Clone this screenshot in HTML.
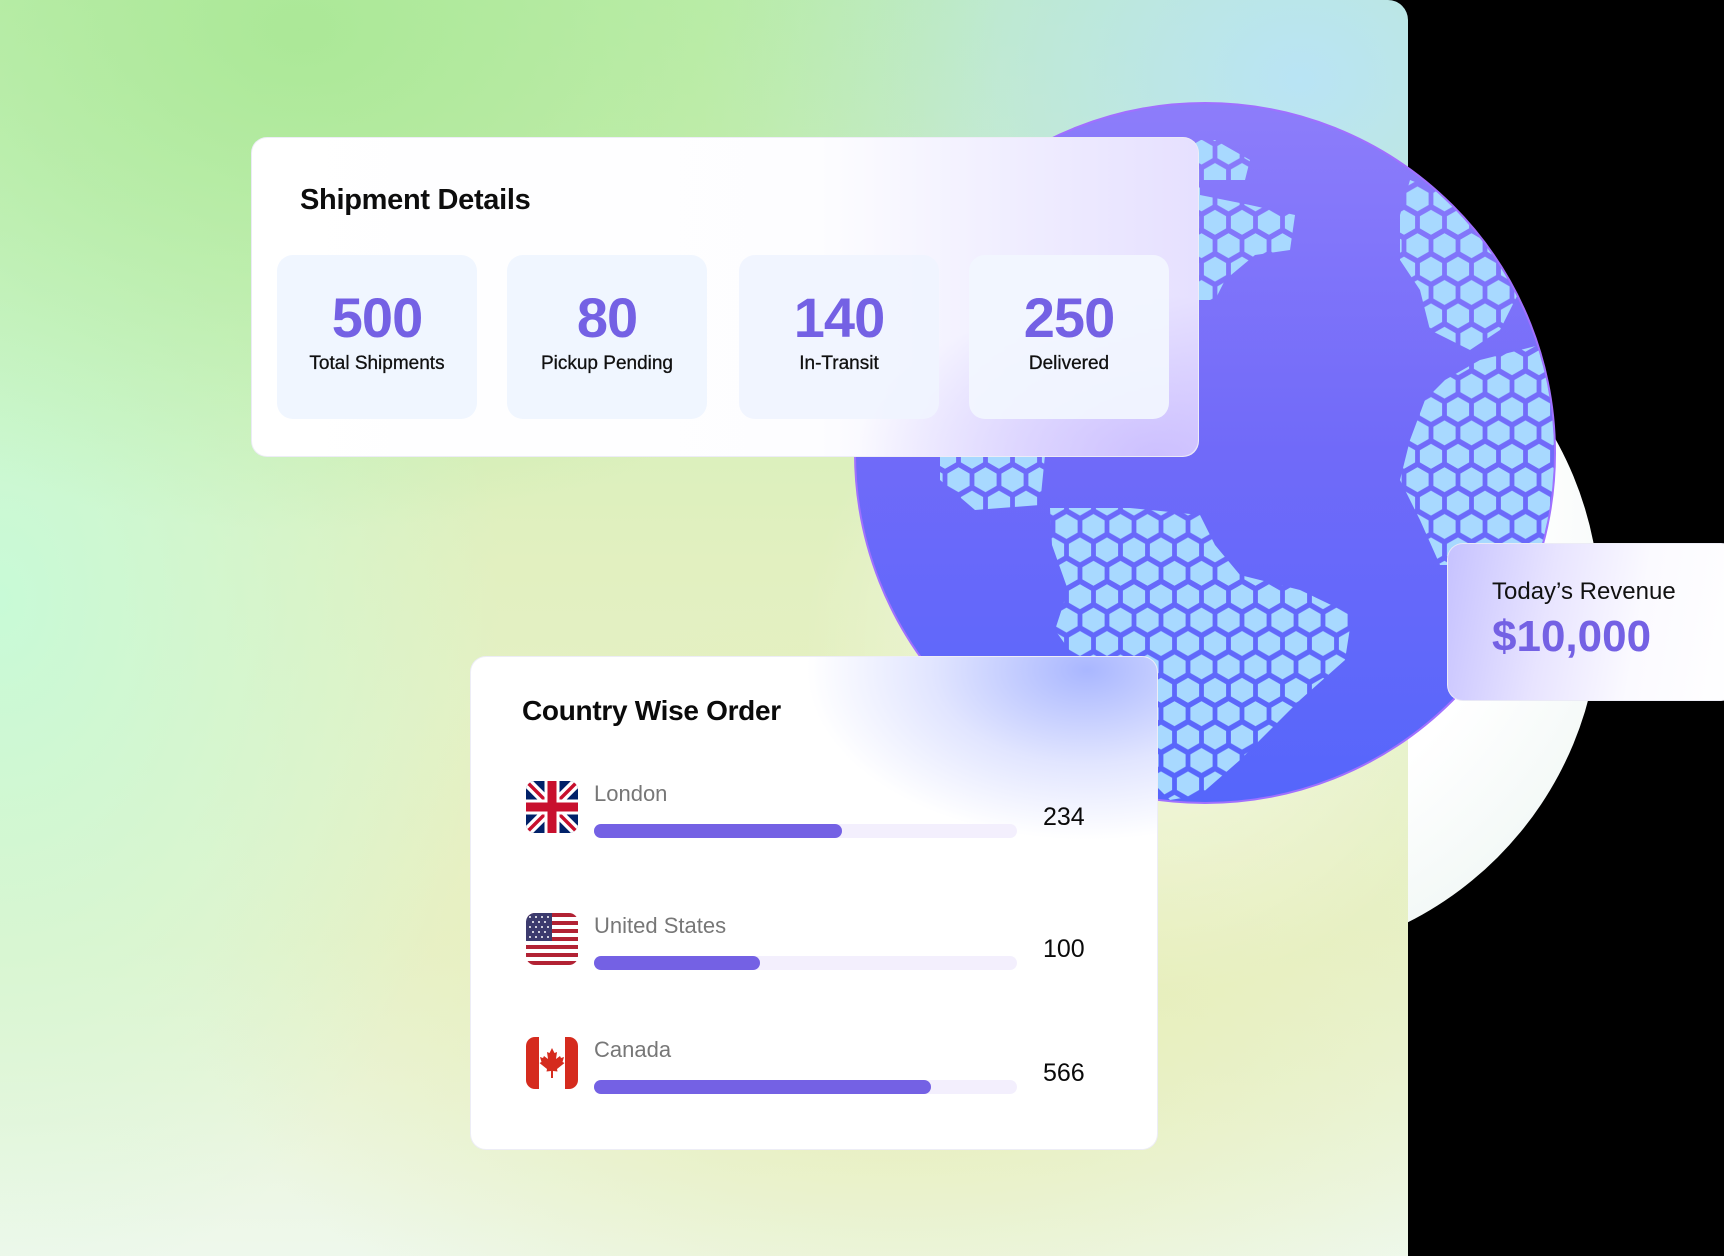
<!DOCTYPE html>
<html><head><meta charset="utf-8">
<style>
html,body{margin:0;padding:0}
body{width:1724px;height:1256px;background:#000;position:relative;overflow:hidden;font-family:"Liberation Sans",sans-serif}
.bg{position:absolute;left:0;top:0;width:1408px;height:1256px;border-top-right-radius:20px;
background:
radial-gradient(ellipse 700px 500px at 300px 30px,rgba(170,232,150,0.95),rgba(170,232,150,0) 100%),
radial-gradient(ellipse 600px 500px at 1300px 80px,rgba(185,228,245,1),rgba(185,228,245,0) 100%),
radial-gradient(ellipse 500px 700px at 0px 600px,rgba(200,250,215,1),rgba(200,250,215,0) 100%),
radial-gradient(ellipse 700px 400px at 900px 1000px,rgba(230,236,175,0.9),rgba(230,236,175,0) 100%),
linear-gradient(180deg,#c2eeb0 0%,#e2f0c0 45%,#e8f2cc 75%,#eef8ec 100%);}
.glow{position:absolute;left:900px;top:260px;width:700px;height:700px;border-radius:50%;
background:radial-gradient(circle at 40% 35%,#ffffff 55%,#f2f8f6 80%,#e6f0e8 100%)}
.glow2{position:absolute;left:800px;top:300px;width:700px;height:700px;border-radius:50%;
background:radial-gradient(circle,rgba(255,255,255,0.6),rgba(255,255,255,0) 70%)}
.card{position:absolute;background:rgba(255,255,255,0.96);border:1.5px solid rgba(235,235,245,0.9);border-radius:16px;box-sizing:border-box}
.ship{left:251px;top:137px;width:948px;height:320px;
background:linear-gradient(90deg,#fff 0%,#fdfdff 60%,#f0eeff 80%,#e6e0ff 100%)}
.ship:after{content:"";position:absolute;right:0;bottom:0;width:420px;height:240px;border-radius:16px;
background:radial-gradient(ellipse 300px 160px at 90% 100%,rgba(195,180,255,0.75),rgba(195,180,255,0))}
.ship h2{position:absolute;left:48px;top:46px;margin:0;font-size:29px;font-weight:700;color:#0d0d0d;letter-spacing:-0.3px}
.box{position:absolute;top:117px;width:200px;height:164px;border-radius:16px;background:#f0f6ff;text-align:center;z-index:1}
.box .n{position:absolute;left:0;right:0;top:30px;font-size:56px;font-weight:700;color:#7461e4;letter-spacing:-1px}
.box .l{position:absolute;left:0;right:0;top:98px;font-size:19px;color:#111;-webkit-text-stroke:0.3px #111}
.country{left:470px;top:656px;width:688px;height:494px;overflow:hidden;
background:#fff}
.country:before{content:"";position:absolute;left:280px;top:-120px;width:560px;height:380px;
background:radial-gradient(ellipse 280px 170px at 60% 35%,rgba(160,175,255,0.9),rgba(180,190,255,0.4) 55%,rgba(255,255,255,0) 100%)}
.country h2{position:absolute;left:51px;top:38px;margin:0;font-size:28px;font-weight:700;color:#0a0a0a;letter-spacing:-0.3px;z-index:1}
.row{position:absolute;left:0;width:688px;height:80px}
.flag{position:absolute;left:55px;top:0;width:52px;height:52px;border-radius:9px;overflow:hidden}
.cname{position:absolute;left:123px;top:0;font-size:22px;color:#777}
.track{position:absolute;left:123px;top:43px;width:423px;height:14px;border-radius:7px;background:#f3effd}
.fill{height:14px;border-radius:7px;background:#7461e4}
.num{position:absolute;left:572px;top:22px;font-size:25px;color:#0a0a0a}
.rev{left:1447px;top:543px;width:290px;height:158px;
background:linear-gradient(100deg,#c6c2ff 0%,#e8e4ff 35%,#fbfaff 65%,#fff 100%)}
.rev .t{position:absolute;left:44px;top:34px;font-size:24px;color:#111}
.rev .v{position:absolute;left:44px;top:68px;font-size:44px;font-weight:700;color:#7461e4}
</style></head><body>
<div class="glow"></div>
<div class="bg"></div>
<div class="glow2"></div>
<svg style="position:absolute;left:0;top:0" width="1724" height="1256">
<defs>
<linearGradient id="gg" x1="0" y1="0" x2="0" y2="1">
<stop offset="0" stop-color="#8d7dfa"/><stop offset="0.5" stop-color="#706af9"/><stop offset="1" stop-color="#5566fb"/>
</linearGradient>
<pattern id="hex" patternUnits="userSpaceOnUse" width="27" height="46.8" x="0" y="0">
<g fill="#a8d9ff">
<polygon points="13.5,-0.8 24.6,5.6 24.6,17.8 13.5,24.2 2.4,17.8 2.4,5.6"/>
<polygon points="13.5,46 24.6,52.4 24.6,64.6 13.5,71 2.4,64.6 2.4,52.4"/>
<polygon points="0,22.6 11.1,29 11.1,41.2 0,47.6 -11.1,41.2 -11.1,29"/>
<polygon points="27,22.6 38.1,29 38.1,41.2 27,47.6 15.9,41.2 15.9,29"/>
<polygon points="0,-24.2 11.1,-17.8 11.1,-5.6 0,0.8 -11.1,-5.6 -11.1,-17.8"/>
<polygon points="27,-24.2 38.1,-17.8 38.1,-5.6 27,0.8 15.9,-5.6 15.9,-17.8"/>
</g>
</pattern>
<clipPath id="gc"><circle cx="1205" cy="453" r="349"/></clipPath>
</defs>
<circle cx="1205" cy="453" r="350" fill="url(#gg)" stroke="#a070ff" stroke-width="2"/>
<g clip-path="url(#gc)" fill="url(#hex)">
<polygon points="1140,140 1215,140 1250,160 1245,180 1200,180 1200,195 1250,205 1295,215 1290,250 1255,255 1225,280 1215,300 1195,300 1170,260"/>
<polygon points="940,455 1045,455 1040,505 975,510 940,480"/>
<polygon points="1050,508 1130,508 1200,515 1215,545 1240,575 1300,590 1352,615 1345,660 1300,700 1240,760 1200,795 1170,800 1140,770 1110,720 1080,665 1055,630 1068,590 1052,545"/>
<polygon points="1410,180 1460,200 1500,240 1520,290 1500,330 1470,350 1430,330 1420,290 1400,260 1400,215"/>
<polygon points="1480,360 1540,345 1556,360 1556,565 1440,565 1420,520 1400,480 1410,440 1425,400 1445,380"/>
</g>
</svg>

<div class="card ship">
<h2>Shipment Details</h2>
<div class="box" style="left:25px"><div class="n">500</div><div class="l">Total Shipments</div></div>
<div class="box" style="left:255px"><div class="n">80</div><div class="l">Pickup Pending</div></div>
<div class="box" style="left:487px;background:rgba(240,244,255,0.9)"><div class="n">140</div><div class="l">In-Transit</div></div>
<div class="box" style="left:717px;background:rgba(242,246,255,0.92)"><div class="n">250</div><div class="l">Delivered</div></div>
</div>

<div class="card country">
<h2>Country Wise Order</h2>
<div class="row" style="top:124px">
<div class="flag"><svg width="52" height="52" viewBox="0 0 52 52">
<rect width="52" height="52" fill="#012169"/>
<path d="M0,0L52,52M52,0L0,52" stroke="#fff" stroke-width="10"/>
<path d="M0,0L52,52M52,0L0,52" stroke="#c8102e" stroke-width="3.5"/>
<path d="M26,0V52M0,26H52" stroke="#fff" stroke-width="15"/>
<path d="M26,0V52M0,26H52" stroke="#c8102e" stroke-width="9"/>
</svg></div>
<div class="cname">London</div>
<div class="track"><div class="fill" style="width:248px"></div></div>
<div class="num">234</div>
</div>
<div class="row" style="top:256px">
<div class="flag"><svg width="52" height="52" viewBox="0 0 52 52">
<rect width="52" height="52" fill="#fff"/>
<g fill="#b22234"><rect y="0" width="52" height="4"/><rect y="8" width="52" height="4"/><rect y="16" width="52" height="4"/><rect y="24" width="52" height="4"/><rect y="32" width="52" height="4"/><rect y="40" width="52" height="4"/><rect y="48" width="52" height="4"/></g>
<rect width="26" height="28" fill="#3c3b6e"/>
<g fill="#fff"><circle cx="4" cy="4" r="1"/><circle cx="10" cy="4" r="1"/><circle cx="16" cy="4" r="1"/><circle cx="22" cy="4" r="1"/><circle cx="7" cy="9" r="1"/><circle cx="13" cy="9" r="1"/><circle cx="19" cy="9" r="1"/><circle cx="4" cy="14" r="1"/><circle cx="10" cy="14" r="1"/><circle cx="16" cy="14" r="1"/><circle cx="22" cy="14" r="1"/><circle cx="7" cy="19" r="1"/><circle cx="13" cy="19" r="1"/><circle cx="19" cy="19" r="1"/><circle cx="4" cy="24" r="1"/><circle cx="10" cy="24" r="1"/><circle cx="16" cy="24" r="1"/><circle cx="22" cy="24" r="1"/></g>
</svg></div>
<div class="cname">United States</div>
<div class="track"><div class="fill" style="width:166px"></div></div>
<div class="num">100</div>
</div>
<div class="row" style="top:380px">
<div class="flag"><svg width="52" height="52" viewBox="0 0 52 52">
<rect width="52" height="52" fill="#fff"/>
<rect width="13" height="52" fill="#d52b1e"/><rect x="39" width="13" height="52" fill="#d52b1e"/>
<path d="M26,11 L28.5,16 L31,15 L30,22 L34,19 L35,21 L38,20 L36.5,25 L38.5,26 L31,32 L31.5,34.5 L27,34 L27,41 L25,41 L25,34 L20.5,34.5 L21,32 L13.5,26 L15.5,25 L14,20 L17,21 L18,19 L22,22 L21,15 L23.5,16 Z" fill="#d52b1e"/>
</svg></div>
<div class="cname">Canada</div>
<div class="track"><div class="fill" style="width:337px"></div></div>
<div class="num">566</div>
</div>
</div>

<div class="card rev">
<div class="t">Today’s Revenue</div>
<div class="v">$10,000</div>
</div>
</body></html>
